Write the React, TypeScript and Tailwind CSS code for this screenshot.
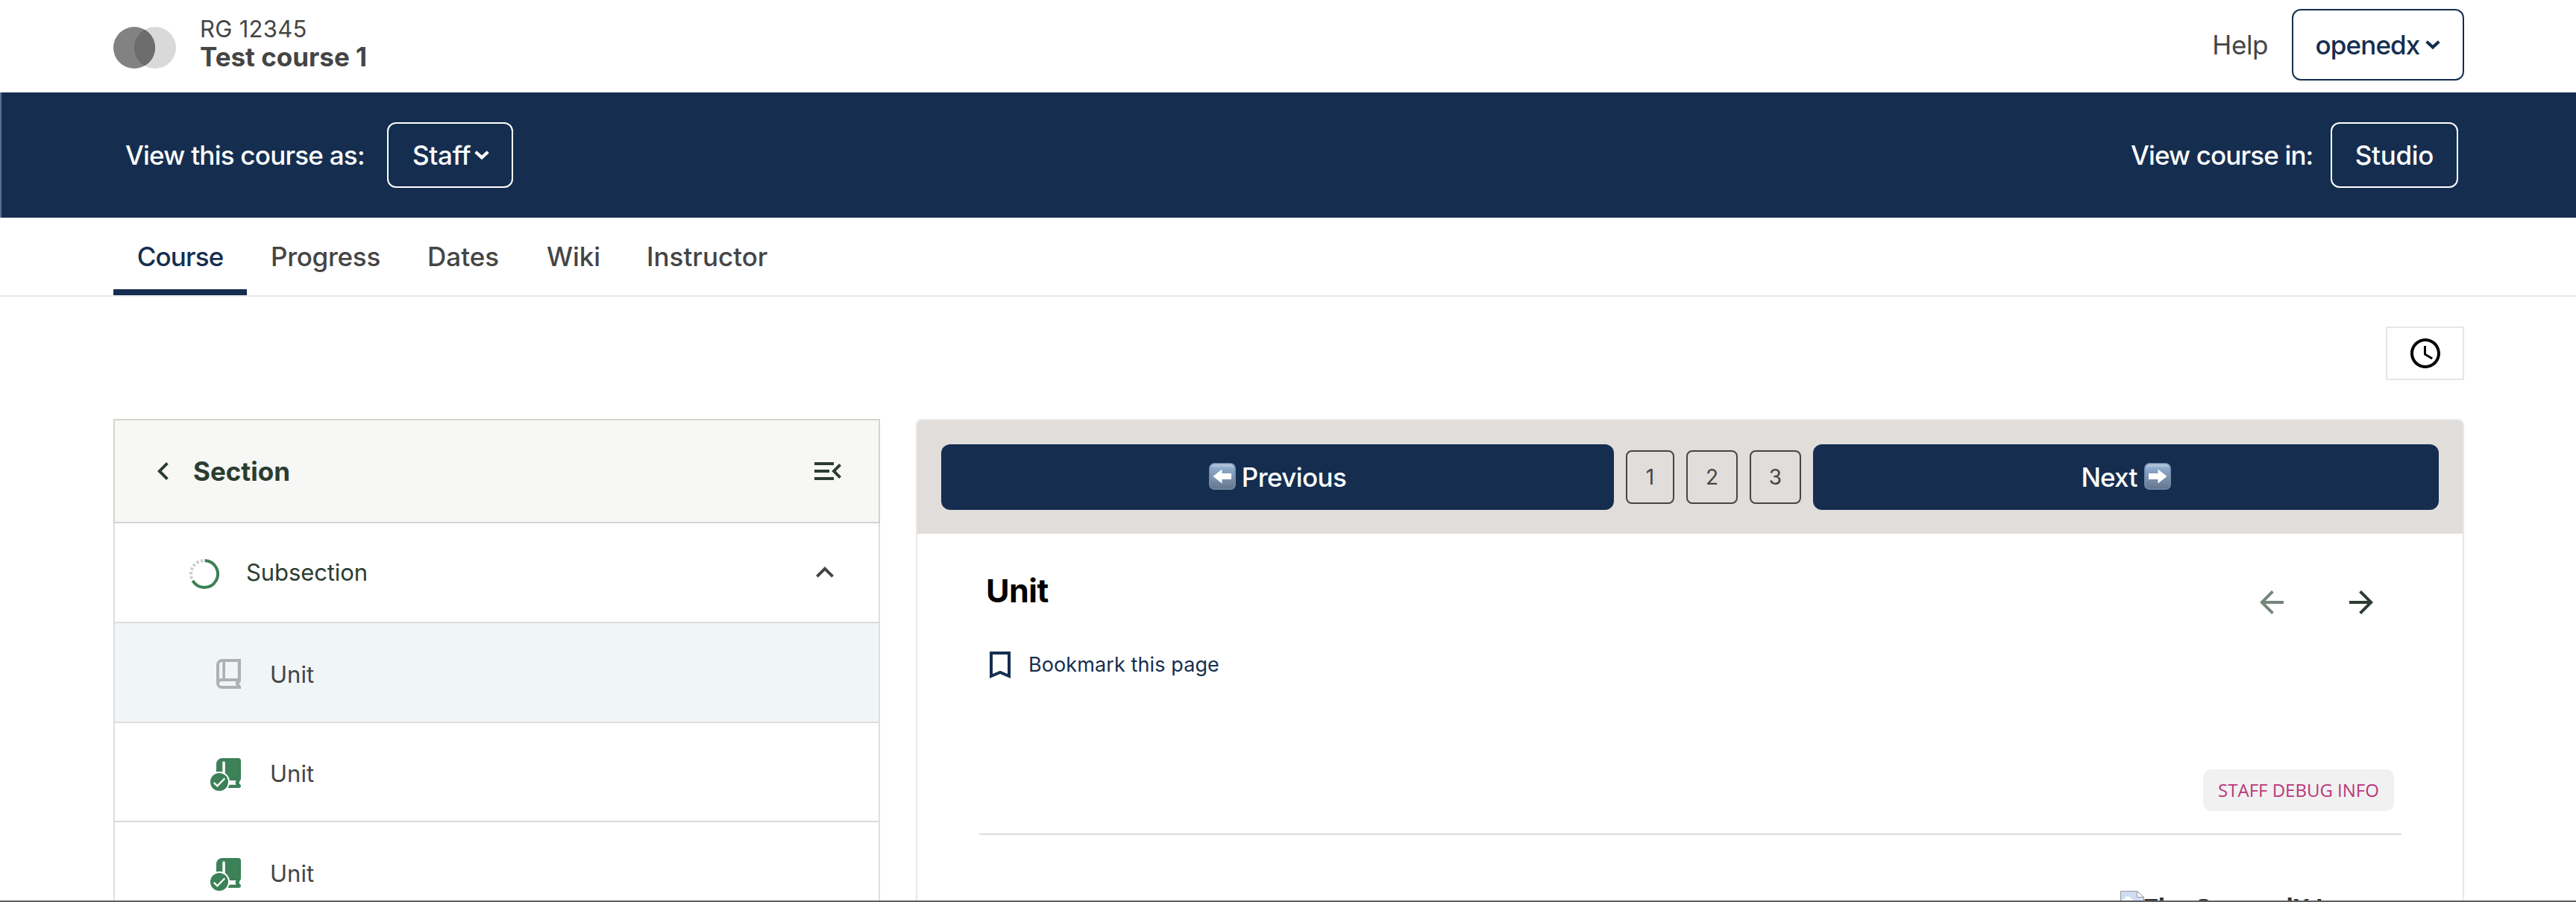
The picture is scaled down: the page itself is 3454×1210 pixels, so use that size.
import type { ReactNode } from "react";

function CaretDown() {
  return (
    <svg viewBox="0 0 20 12" className="h-3 w-5 shrink-0" fill="none">
      <path d="M1.700 1.700L10 9.400L18.300 1.700" stroke="currentColor" strokeWidth="4.200" />
    </svg>
  );
}

function Icon({ d, className }: { d: string; className: string }) {
  return (
    <svg viewBox="0 0 24 24" fill="currentColor" className={`size-12 shrink-0 ${className}`}>
      <path d={d} />
    </svg>
  );
}

function Logo() {
  return (
    <svg viewBox="0 0 84 56" className="mt-9 h-14 w-[84px]">
      <circle cx="56" cy="28" r="28" fill="#d9d9d9" />
      <circle cx="28" cy="28" r="28" fill="#828282" />
      <path d="M42 3.75a28 28 0 0 1 0 48.5a28 28 0 0 1 0-48.5z" fill="#6c6c6c" />
    </svg>
  );
}

function ProgressRing() {
  return (
    <svg viewBox="0 0 40 40" className="size-10 shrink-0" fill="none" strokeWidth="4">
      <path d="M20 2A18 18 0 0 0 4.41 29" stroke="#cccccc" strokeDasharray="3.2 2.7" strokeDashoffset="-1.8" />
      <path d="M20.6 2A18 18 0 1 1 4.41 29" stroke="#3c8157" />
    </svg>
  );
}

function Book({ done }: { done: boolean }) {
  return (
    <svg viewBox="-8 0 41 44" className="h-11 w-[41px] shrink-0">
      {done ? (
        <>
          <path
            d="M8 0H29.500a3.500 3.500 0 0 1 3.500 3.500V27.500a3.500 3.500 0 0 1-1.500 3L30.500 33.500L33 36.500V37a3 3 0 0 1-3 3H8a8 8 0 0 1-8-8V8a8 8 0 0 1 8-8z"
            fill="#3c8157"
          />
          <path d="M8.300 22V6a1.750 1.750 0 0 1 3.500 0V22z M8 30H26.500L25.500 33L26.500 35.700H8z" fill="#fff" />
          <circle cx="4" cy="32" r="14" fill="#fff" />
          <circle cx="4" cy="32" r="12" fill="#3c8157" />
          <path d="M-3.300 32.800L1.400 37.300L11.300 27.300" fill="none" stroke="#fff" strokeWidth="2.300" />
        </>
      ) : (
        <path
          fillRule="evenodd"
          fill="#b0b0b0"
          d="M8 0H33V30L30.500 33L33 36.500V40H8a8 8 0 0 1-8-8V8a8 8 0 0 1 8-8z M8.300 4V26H7a6 6 0 0 0-3 .8V8a4 4 0 0 1 4-4z M12 4V26H28.800V4z M7 30a3 3 0 0 0 0 6H27L25.700 33L26.500 30z"
        />
      )}
    </svg>
  );
}

function ArrowEmoji({ flip }: { flip?: boolean }) {
  return (
    <svg viewBox="0 0 36 36" className={flip ? "mb-0.5 size-9 -scale-x-100" : "mb-0.5 size-9"}>
      <defs>
        <linearGradient id="key" x1="0" y1="0" x2="0" y2="1">
          <stop offset="0" stopColor="#c3d3e6" />
          <stop offset="0.2" stopColor="#8ba9cb" />
          <stop offset="0.55" stopColor="#7c93b0" />
          <stop offset="1" stopColor="#64748c" />
        </linearGradient>
      </defs>
      <rect x="0.75" y="0.75" width="34.500" height="34.500" rx="6.500" fill="url(#key)" stroke="#7389a6" strokeWidth="1.500" />
      <path d="M5.500 18L17.500 8.500V14H30V22H17.500V27.500z" fill="#fff" />
    </svg>
  );
}

function UnitRow({ active, done, className }: { active?: boolean; done: boolean; className: string }) {
  return (
    <div
      className={`flex items-center border-b-2 border-[#dedcdb] pl-32 ${active ? "bg-[#f0f5f8]" : "bg-white"} ${className}`}
    >
      <div className="pt-[7px]">
        <Book done={done} />
      </div>
      <span className="ml-[39px] pt-[5px] text-[31px] leading-10 font-[430] text-[#454545]">Unit</span>
    </div>
  );
}

function PageNumber({ children, className }: { children: ReactNode; className: string }) {
  return (
    <div
      className={`flex h-[72px] items-center justify-center rounded-[8px] border-2 border-[#454545] text-[28px] text-[#454545] ${className}`}
    >
      {children}
    </div>
  );
}

export default function App() {
  return (
    <div className="flex h-[1210px] w-[3454px] flex-col overflow-hidden border-b-2 border-[#5f5f5f] bg-white font-['Inter','Liberation_Sans',sans-serif] text-[35px] leading-10 text-[#454545]">
      <header className="flex h-[124px] shrink-0 justify-between pr-[150px] pl-[152px]">
        <div className="flex">
          <Logo />
          <div className="ml-8 pt-5">
            <div className="text-[31px] leading-[38px] tracking-[0.28px]">RG 12345</div>
            <div className="font-bold leading-[37px]">Test course 1</div>
          </div>
        </div>
        <div className="flex h-[120px] items-center">
          <span className="mr-8 tracking-[-0.4px]">Help</span>
          <div className="flex h-24 w-[231px] items-center justify-center gap-[8px] rounded-[12px] border-2 border-[#152e50] font-[450] text-[#152e50]">
            <span className="tracking-[-0.9px]">openedx</span>
            <CaretDown />
          </div>
        </div>
      </header>

      <div className="flex h-[168px] shrink-0 items-center justify-between border-l-2 border-[#5a6f8c] bg-[#152e50] pr-[158px] pl-[166px] font-[450] text-white">
        <div className="flex items-center">
          <span className="w-[351px] tracking-[-0.76px]">View this course as:</span>
          <div className="flex h-[88px] w-[169px] items-center gap-[5px] rounded-[12px] border-2 border-white pl-8">
            <span className="tracking-[-0.3px]">Staff</span>
            <CaretDown />
          </div>
        </div>
        <div className="flex items-center">
          <span className="w-[268px] tracking-[-0.85px]">View course in:</span>
          <div className="flex h-[88px] w-[171px] items-center justify-center rounded-[12px] border-2 border-white tracking-[-0.3px]">
            Studio
          </div>
        </div>
      </div>

      <nav className="flex h-[106px] shrink-0 border-b-2 border-[#e8e8e8] pl-[152px] font-medium">
        <div className="flex h-full w-[179px] justify-center border-b-8 border-[#152e50] pt-8 font-[450] tracking-[-0.85px] text-[#152e50]">
          Course
        </div>
        <div className="w-[211px] pt-8 pl-8 tracking-[-0.29px]">Progress</div>
        <div className="w-[159px] pt-8 pl-[31px]">Dates</div>
        <div className="w-[134px] pt-8 pl-8 tracking-[-0.1px]">Wiki</div>
        <div className="pt-8 pl-8">Instructor</div>
      </nav>

      <main className="flex flex-col pt-10 pr-[150px] pl-[152px]">
        <div className="flex h-[72px] w-[105px] items-center justify-center self-end border-2 border-[#e6e6e4] text-black">
          <Icon
            className=""
            d="M11.99 2C6.47 2 2 6.48 2 12s4.47 10 9.99 10C17.52 22 22 17.52 22 12S17.52 2 11.99 2zM12 20c-4.42 0-8-3.58-8-8s3.58-8 8-8 8 3.58 8 8-3.58 8-8 8zm.5-13H11v6l5.25 3.15.75-1.23-4.5-2.67z"
          />
        </div>

        <div className="mt-[52px] flex gap-12">
          <aside className="h-[700px] w-[1028px] shrink-0">
            <div className="flex h-[140px] items-center border-2 border-[#d6d2cf] bg-[#f7f7f5] pr-11 pl-[41px] text-[#2b3d30]">
              <Icon className="" d="M15.41 7.41 14 6l-6 6 6 6 1.41-1.41L10.83 12z" />
              <span className="ml-4 grow font-bold">Section</span>
              <Icon
                className=""
                d="M3 18h13v-2H3v2zm0-5h10v-2H3v2zm0-7v2h13V6H3zm18 9.590L17.420 12 21 8.410 19.590 7l-5 5 5 5L21 15.590z"
              />
            </div>
            <div className="border-x-2 border-[#dedede]">
              <div className="flex h-[134px] items-center border-b-2 border-[#dedcdb] pr-12 pl-[100px]">
                <div className="pt-1">
                  <ProgressRing />
                </div>
                <span className="ml-9 grow text-[31px] font-[430] tracking-[-0.1px] text-[#2b3d30]">Subsection</span>
                <Icon className="" d="m12 8-6 6 1.410 1.410L12 10.830l4.590 4.580L18 14z" />
              </div>
              <UnitRow active done={false} className="h-[134px]" />
              <UnitRow done className="h-[133px]" />
              <UnitRow done className="h-[134px]" />
            </div>
          </aside>

          <section className="flex h-[800px] grow flex-col overflow-hidden rounded-t-[8px] border-2 border-[#e8e8e8]">
            <div className="flex h-[152px] shrink-0 items-center gap-4 bg-[#e0dddb] px-8 text-white">
              <div className="flex h-[88px] w-[902px] items-center justify-center gap-[8px] rounded-[12px] bg-[#152e50]">
                <ArrowEmoji />
                <span className="font-[450] tracking-[-0.6px]">Previous</span>
              </div>
              <PageNumber className="w-[65px]">1</PageNumber>
              <PageNumber className="w-[69px]">2</PageNumber>
              <PageNumber className="w-[69px]">3</PageNumber>
              <div className="flex h-[88px] grow items-center justify-center gap-[9px] rounded-[12px] bg-[#152e50]">
                <span className="font-[450] tracking-[-0.8px]">Next</span>
                <ArrowEmoji flip />
              </div>
            </div>

            <div className="flex h-[200px] shrink-0 justify-between pr-28 pl-[87px]">
              <div className="pt-[50px]">
                <h1 className="pl-[5px] text-[43px] leading-[52px] font-bold tracking-[-0.5px] text-black">Unit</h1>
                <div className="mt-[50px] flex h-12 items-center gap-[14px] text-[#152e50]">
                  <Icon className="" d="M19 3H5v18l7-3 7 3V3zm-2 15-5-2.180L7 18V5h10v13z" />
                  <span className="text-[27px] font-[430] tracking-[0.1px]">Bookmark this page</span>
                </div>
              </div>
              <div className="flex gap-[72px] pt-[68px]">
                <Icon
                  className="text-[#75857a]"
                  d="M20 11H7.830l5.590-5.590L12 4l-8 8 8 8 1.410-1.410L7.830 13H20v-2z"
                />
                <Icon className="text-[#2b3d30]" d="m12 4-1.410 1.410L16.170 11H4v2h12.170l-5.580 5.590L12 20l8-8z" />
              </div>
            </div>

            <div className="mr-[82px] ml-[83px] flex shrink-0 flex-col border-b-2 border-[#dcdcdc] pt-[116px] pr-[10px] pb-[30px]">
              <div className="flex h-14 w-64 items-center justify-center self-end rounded-[10px] bg-[#f1f1f1] font-['Open_Sans',sans-serif] text-[24px] text-[#b8387a]">
                STAFF DEBUG INFO
              </div>
            </div>

            <div className="mt-[75px] flex shrink-0 pl-[1613px]">
              <svg viewBox="0 0 32 32" className="size-8">
                <path d="M.5 .5H22.500L31.500 8.500V31.500H.5z" fill="#cfdcf6" stroke="#9a9a9a" />
                <path d="M22.500 .5V8.500H31.500z" fill="#fff" stroke="#9a9a9a" />
                <path d="M3 15a4 4 0 0 1 3-5a5 5 0 0 1 9 1a3 3 0 0 1 2 4z" fill="#fff" />
              </svg>
              <span className="mt-[2px] font-['Open_Sans',sans-serif] text-[32px] leading-[40px] font-bold whitespace-nowrap text-[#313131]">
                The Open edX Logo
              </span>
            </div>
          </section>
        </div>
      </main>
    </div>
  );
}
